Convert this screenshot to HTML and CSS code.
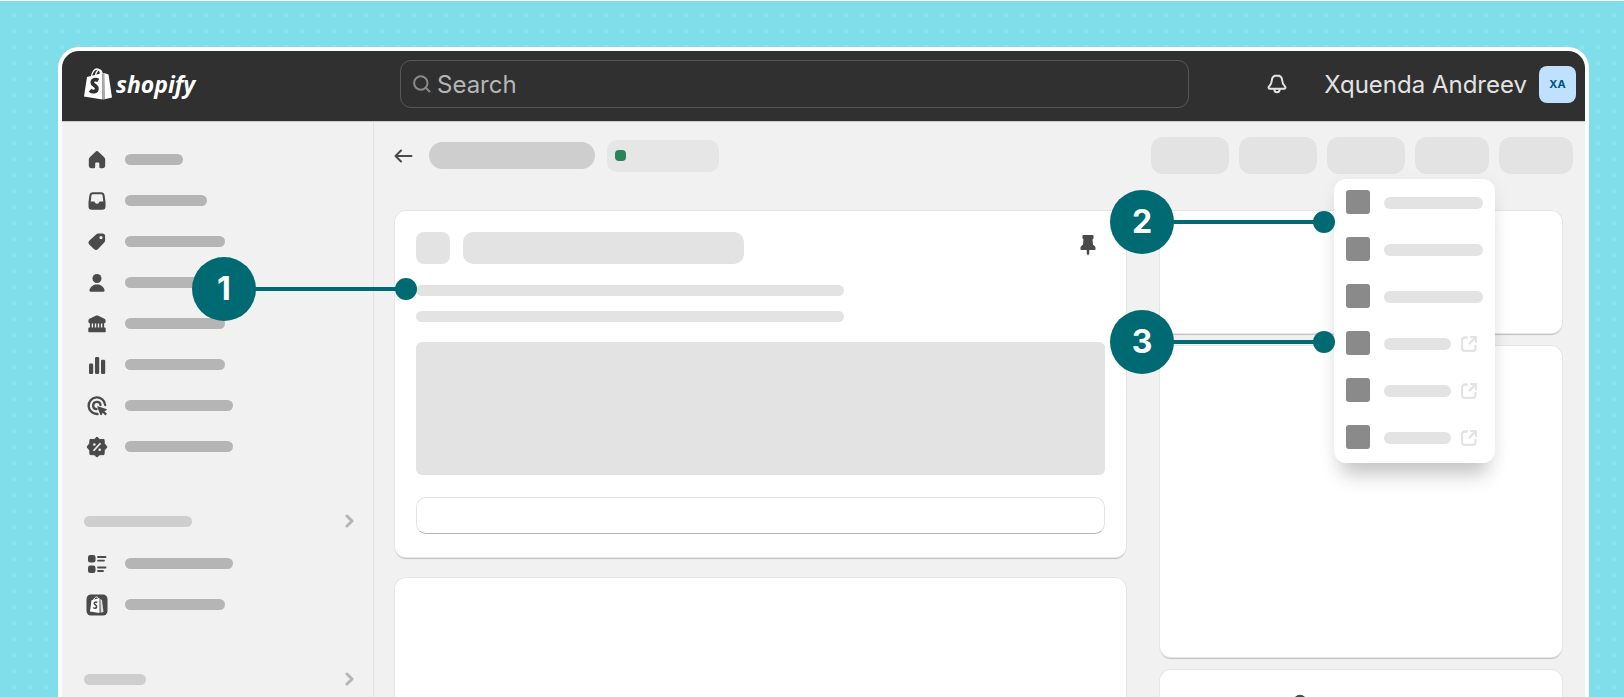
FILE: index.html
```html
<!DOCTYPE html>
<html lang="en">
<head>
  <meta charset="UTF-8">
  <meta name="viewport" content="width=device-width, initial-scale=1">
  <title>Shopify admin</title>
  <link rel="stylesheet" href="styles.css">
</head>
<body>

<!-- shared icons -->
<svg class="sprite" aria-hidden="true">
  <symbol id="chevron" viewBox="0 0 10 14">
    <path d="M2 2l5 5-5 5" fill="none" stroke="#b5b5b5" stroke-width="3" stroke-linecap="round" stroke-linejoin="round"/>
  </symbol>
  <symbol id="external" viewBox="0 0 16 16">
    <path d="M6 1.500H4A3 3 0 0 0 1 4.500V12a3 3 0 0 0 3 3h7.500a3 3 0 0 0 3-3v-2M10 1h5v5M14.500 1.500L8.500 7.500" fill="none" stroke="#e3e3e3" stroke-width="2.300" stroke-linecap="round" stroke-linejoin="round"/>
  </symbol>
</svg>

<div class="window">
  <header class="topbar">
    <a class="logo" href="#" aria-label="Shopify">
      <svg class="logo-bag" viewBox="0 0 28 32" aria-hidden="true">
        <path d="M3 9L18.500 5v26.500L0 28.500z" fill="#fff"/>
        <path d="M20 5l4.500 1.500L28 29.500l-7.500 1.800z" fill="#fff"/>
        <path d="M18.500 5h2v26.500h-2z" fill="#aaa"/>
        <path d="M7.500 8.500C8 4 10.500 1 13 1c2.500 0 3.500 3 3.500 5.500M11.500 7.500C12 4 14 1.500 15.500 2c2 .5 2.500 2 2.500 4" fill="none" stroke="#fff" stroke-width="1.300"/>
        <path d="M14.300 12.300c-2.800-1.500-6-.5-6 2.200 0 3 5 3 4.500 6.500-.3 3-4.300 3.500-6.800 1.300" fill="none" stroke="#303030" stroke-width="3.800"/>
      </svg>
      <span class="logo-name">shopify</span>
    </a>
    <label class="search">
      <svg width="18" height="18" viewBox="0 0 18 18" aria-hidden="true">
        <path d="M12.500 12.500L16.500 16.500M14.500 8a6.700 6.700 0 1 1-13.400 0a6.700 6.700 0 0 1 13.400 0z" fill="none" stroke="#8a8a8a" stroke-width="2" stroke-linecap="round"/>
      </svg>
      <input type="search" placeholder="Search" aria-label="Search">
    </label>
    <div class="account">
      <button class="bell" type="button" aria-label="Notifications">
        <svg width="20" height="20" viewBox="0 0 20 20" aria-hidden="true">
          <path d="M10 1.500c-3 0-5 2.200-5.200 5-.2 3-.8 4.300-2.600 5.700-1.200 1-.6 2.500.8 2.500h14c1.400 0 2-1.500.8-2.500-1.800-1.400-2.400-2.700-2.600-5.700-.2-2.800-2.200-5-5.200-5zM7.300 15c0 2 1.200 3.300 2.700 3.300s2.700-1.300 2.700-3.300" fill="none" stroke="#e3e3e3" stroke-width="2" stroke-linejoin="round"/>
        </svg>
      </button>
      <span class="user-name">Xquenda Andreev</span>
      <span class="avatar">XA</span>
    </div>
  </header>

  <div class="layout">
    <nav class="sidebar" aria-label="Main">
      <a class="nav-item" href="#" aria-label="Home">
        <svg viewBox="0 0 20 20"><path d="M8.300 1.900a2.500 2.500 0 0 1 3.400 0l5.300 5c.8.700 1.200 1.600 1.200 2.600v6.300a2.400 2.400 0 0 1-2.400 2.400h-2a1.500 1.500 0 0 1-1.500-1.500V13.500c0-.6-.4-1-1-1H9.200c-.6 0-1 .4-1 1v3.200a1.500 1.500 0 0 1-1.500 1.500H4.200a2.400 2.400 0 0 1-2.400-2.400V9.500c0-1 .4-1.900 1.200-2.600z"/></svg>
        <span class="bar w58"></span>
      </a>
      <a class="nav-item" href="#" aria-label="Orders">
        <svg viewBox="0 0 20 20"><path fill-rule="evenodd" d="M5.500 1.200h9a3 3 0 0 1 3 2.600l1 7.200v4.500a3.300 3.300 0 0 1-3.300 3.300H4.800a3.300 3.300 0 0 1-3.300-3.300V11l1-7.200a3 3 0 0 1 3-2.600zM5.800 3.200c-.7 0-1.200.4-1.300 1.100L3.700 10.500h2.800c.8 0 1.200.5 1.600 1.200.4.600 1 1 1.900 1s1.500-.4 1.900-1c.4-.7.800-1.200 1.600-1.200h2.800l-.8-6.200c-.1-.7-.6-1.100-1.300-1.100z"/></svg>
        <span class="bar w82"></span>
      </a>
      <a class="nav-item" href="#" aria-label="Products">
        <svg viewBox="0 0 20 20"><path fill-rule="evenodd" d="M11.300 1.500h4.200A2.600 2.600 0 0 1 18.100 4.100v4.200c0 .8-.3 1.500-.9 2.100l-6.100 6.600a3 3 0 0 1-4.200 0l-4.400-4.300a3 3 0 0 1 0-4.200l6.600-6.100A3.200 3.200 0 0 1 11.300 1.500zM14 7.200a1.600 1.600 0 1 0 0-3.200a1.600 1.600 0 0 0 0 3.200z"/></svg>
        <span class="bar w100"></span>
      </a>
      <a class="nav-item" href="#" aria-label="Customers">
        <svg viewBox="0 0 20 20"><circle cx="10" cy="5.500" r="4.500"/><path d="M2.500 17c.8-3.500 4-5.500 7.500-5.500s6.700 2 7.500 5.500c.2 1-.2 1.700-1.200 1.700H3.700c-1 0-1.400-.7-1.200-1.700z"/></svg>
        <span class="bar w100"></span>
      </a>
      <a class="nav-item" href="#" aria-label="Finances">
        <svg viewBox="0 0 20 20"><path d="M9.200 1.600c.5-.3 1.100-.3 1.600 0l6.700 3.200c.7.3 1.100.9 1.100 1.600v1.300c0 .9-.7 1.500-1.500 1.500v4.300h.4c.8 0 1.200.5 1.200 1.200v2.600c0 .6-.4 1-1 1H2.300c-.6 0-1-.4-1-1v-2.600c0-.7.500-1.200 1.200-1.200h.4V9.200c-.8 0-1.500-.6-1.500-1.500V6.400c0-.7.400-1.300 1.100-1.600z"/><path d="M5.400 9.500v4M8.500 9.500v4M11.500 9.500v4M14.600 9.500v4" stroke="#f1f1f1" stroke-width="1.400"/></svg>
        <span class="bar w100"></span>
      </a>
      <a class="nav-item" href="#" aria-label="Analytics">
        <svg viewBox="0 0 20 20"><rect x="2" y="8.500" width="4.200" height="10.500" rx="1.300"/><rect x="8" y="2" width="4.200" height="17" rx="1.300"/><rect x="14" y="4.800" width="4.200" height="14.200" rx="1.300"/></svg>
        <span class="bar w100"></span>
      </a>
      <a class="nav-item" href="#" aria-label="Marketing">
        <svg viewBox="0 0 20 20"><path d="M18.200 9A8.300 8.300 0 1 0 10.500 18M13.500 9A3.700 3.700 0 1 0 9.500 13.200" fill="none" stroke="#4a4a4a" stroke-width="2.300" stroke-linecap="round"/><path d="M10.800 10.300l8.500 2.700c.6.200.7 1 .1 1.300l-2 1 2.600 2.400-1.700 1.700-2.500-2.600-1.200 2.100c-.3.500-1.100.4-1.300-.1l-3-7.900c-.1-.4.100-.7.500-.6z"/></svg>
        <span class="bar w108"></span>
      </a>
      <a class="nav-item" href="#" aria-label="Discounts">
        <svg viewBox="0 0 20 20"><path d="M10 0l2.800 2.500 4.200-.1.300 4L20 10l-2.700 3.300-.3 4.300-4.200.1L10 20l-2.800-2.300-4.200-.1-.3-4.300L0 10l2.700-3.600.3-4 4.200.1z" stroke="#4a4a4a" stroke-linejoin="round"/><path d="M7 13.300l6-6.600" stroke="#f1f1f1" stroke-width="1.700" stroke-linecap="round"/><circle cx="7.300" cy="7.500" r="1.300" fill="#f1f1f1"/><circle cx="12.700" cy="12.700" r="1.300" fill="#f1f1f1"/></svg>
        <span class="bar w108"></span>
      </a>

      <div class="nav-heading">
        <span class="bar w108"></span>
        <svg width="10" height="14" aria-hidden="true"><use href="#chevron"/></svg>
      </div>
      <a class="nav-item" href="#" aria-label="Online Store">
        <svg viewBox="0 0 20 20"><rect x="1" y="1" width="7.500" height="7.500" rx="2.300"/><rect x="1" y="11.500" width="7.500" height="7.500" rx="2.300"/><path d="M11 3h7.500M11 6.600h6M11 13.500h7.500M11 17h5" stroke="#4a4a4a" stroke-width="1.800" stroke-linecap="round"/></svg>
        <span class="bar w108"></span>
      </a>
      <a class="nav-item" href="#" aria-label="Point of Sale">
        <svg viewBox="0 0 20 20"><rect x="-0.500" y="-0.500" width="21" height="21" rx="4.500"/><path d="M4.500 5.200L12.500 3v15L3 16.500z" fill="#fff"/><path d="M13.300 4l1.700 1 1.500 12-2.800.8z" fill="#ddd"/><path d="M6.500 5.500c.4-2 1.700-3.500 3-3.500s2 1.200 2.200 2.500" fill="none" stroke="#fff"/><path d="M10.300 7.500c-1.500-.9-3-.3-3 .9 0 1.500 2.500 1.600 2.300 3.400-.2 1.600-2 1.800-3.300.7" fill="none" stroke="#4a4a4a" stroke-width="1.600"/></svg>
        <span class="bar w100"></span>
      </a>
      <div class="nav-heading">
        <span class="bar w62"></span>
        <svg width="10" height="14" aria-hidden="true"><use href="#chevron"/></svg>
      </div>
    </nav>

    <main class="main">
      <div class="page-header">
        <a class="back" href="#" aria-label="Back">
          <svg width="19" height="14" viewBox="0 0 19 14" aria-hidden="true"><path d="M17.500 7H2M7 1.500L1.500 7 7 12.500" fill="none" stroke="#4a4a4a" stroke-width="2" stroke-linecap="round" stroke-linejoin="round"/></svg>
        </a>
        <div class="page-title"></div>
        <div class="status"><span class="status-dot"></span></div>
        <div class="actions">
          <button class="action" type="button" aria-label="Duplicate"></button>
          <button class="action" type="button" aria-label="Preview"></button>
          <div class="dropdown">
            <button class="action" type="button" aria-label="More actions"></button>
            <ul class="menu">
              <li><span class="thumb"></span><span class="line"></span></li>
              <li><span class="thumb"></span><span class="line"></span></li>
              <li><span class="thumb"></span><span class="line"></span></li>
              <li><span class="thumb"></span><span class="line"></span><svg width="16" height="16"><use href="#external"/></svg></li>
              <li><span class="thumb"></span><span class="line"></span><svg width="16" height="16"><use href="#external"/></svg></li>
              <li><span class="thumb"></span><span class="line"></span><svg width="16" height="16"><use href="#external"/></svg></li>
            </ul>
          </div>
          <button class="action action-nav" type="button" aria-label="Previous"></button>
          <button class="action action-nav" type="button" aria-label="Next"></button>
        </div>
      </div>

      <div class="columns">
        <div class="column column-main">
          <section class="card card-detail">
            <div class="card-header">
              <span class="card-icon"></span>
              <span class="card-title"></span>
              <svg class="pin" width="16" height="26" viewBox="0 0 16 26" aria-hidden="true"><path d="M3.500 0h9c.6 0 1 .4 1 1v2c0 .8-.4 1.300-1 1.600l.6 5.400c1.700.5 2.400 1.600 2.400 3v1c0 .6-.4 1-1 1H9.300v3.500L8 20.500 6.700 18.500V15H1.500c-.6 0-1-.4-1-1v-1c0-1.400.7-2.500 2.400-3l.6-5.400c-.6-.3-1-.8-1-1.600V1c0-.6.400-1 1-1z" fill="#4a4a4a"/></svg>
            </div>
            <div class="text-line"></div>
            <div class="text-line"></div>
            <div class="media"></div>
            <input class="field" type="text" aria-label="Note">
          </section>
          <section class="card card-tall"></section>
        </div>
        <div class="column column-side">
          <section class="card card-short"></section>
          <section class="card card-medium"></section>
          <section class="card card-search">
            <svg width="20" height="20" viewBox="0 0 20 20" aria-hidden="true"><circle cx="10" cy="7.500" r="5.500" fill="none" stroke="#4a4a4a" stroke-width="2.500"/></svg>
          </section>
        </div>
      </div>
    </main>
  </div>

  <div class="callout callout-1"><span class="callout-number">1</span></div>
  <div class="callout callout-2"><span class="callout-number">2</span></div>
  <div class="callout callout-3"><span class="callout-number">3</span></div>
</div>

</body>
</html>
```
FILE: styles.css
```css
* {
  box-sizing: border-box;
}
body {
  margin: 0;
  height: 100vh;
  overflow: hidden;
  padding: 46px 35px 0 58px;
  border-top: 1px solid #fff;
  font-family: Inter, "Liberation Sans", sans-serif;
  background-color: #80ddea;
  background-image: conic-gradient(from 270deg at 4px 4px, #8ce1ec 90deg, transparent 0);
  background-size: 16px 16px;
  background-position: 12px 13px;
}
.sprite {
  display: none;
}
button {
  border: none;
  padding: 0;
  cursor: pointer;
}

/* window */
.window {
  position: relative;
  border: 4px solid #fff;
  border-bottom: none;
  border-radius: 21px 21px 0 0;
  background-color: #f1f1f1;
}
.topbar {
  display: flex;
  align-items: center;
  height: 71px;
  padding: 0 9px 4px 22px;
  background-color: #303030;
  border-bottom: 1px solid #ccc;
  border-radius: 17px 17px 0 0;
}
.logo {
  display: flex;
  align-items: center;
  gap: 4px;
  width: 316px;
  color: #fff;
  text-decoration: none;
}
.logo-bag {
  width: 28px;
  height: 32px;
}
.logo-name {
  font-family: "Open Sans", sans-serif;
  font-size: 23px;
  line-height: 32px;
  font-weight: 700;
  font-style: italic;
}
.search {
  display: flex;
  align-items: center;
  gap: 6px;
  flex: 1;
  height: 48px;
  padding: 0 12px;
  border: 1px solid #575757;
  border-radius: 11px;
}
.search input {
  flex: 1;
  min-width: 0;
  border: none;
  outline: none;
  padding: 0;
  background: none;
  color: #e3e3e3;
  font-family: inherit;
  font-size: 24px;
}
.search input::placeholder {
  color: #b5b5b5;
}
.account {
  display: flex;
  align-items: center;
  justify-content: flex-end;
  width: 387px;
}
.bell {
  height: 20px;
  margin-right: 37px;
  background: none;
}
.user-name {
  color: #e3e3e3;
  font-size: 24px;
  margin-right: 12px;
}
.avatar {
  width: 37px;
  height: 37px;
  border-radius: 8px;
  background-color: #bfe0ff;
  color: #00527c;
  font-size: 11px;
  line-height: 37px;
  font-weight: 700;
  text-align: center;
}

/* sidebar */
.layout {
  display: flex;
  min-height: 700px;
}
.sidebar {
  width: 312px;
  padding-top: 17px;
  border-right: 1px solid #e3e3e3;
}
.nav-item {
  display: flex;
  align-items: center;
  gap: 18px;
  height: 41px;
  padding-left: 25px;
}
.nav-item svg {
  width: 20px;
  height: 20px;
  overflow: visible;
  fill: #4a4a4a;
}
.bar {
  height: 11px;
  border-radius: 6px;
  background-color: #b5b5b5;
}
.nav-heading {
  display: flex;
  align-items: center;
  justify-content: space-between;
  height: 24px;
  margin-top: 42px;
  margin-bottom: 10px;
  padding: 0 18px 0 22px;
}
.nav-heading .bar {
  background-color: #cecece;
}
.w58 { width: 58px; }
.w62 { width: 62px; }
.w82 { width: 82px; }
.w100 { width: 100px; }
.w108 { width: 108px; }

/* page header */
.main {
  flex: 1;
  min-width: 0;
}
.page-header {
  display: flex;
  align-items: center;
  height: 67px;
  padding: 0 12px 0 20px;
}
.back {
  height: 14px;
  margin-right: 16px;
}
.back svg, .bell svg {
  display: block;
}
.page-title {
  width: 166px;
  height: 27px;
  margin-right: 12px;
  border-radius: 14px;
  background-color: #cecece;
}
.status {
  display: flex;
  align-items: center;
  width: 112px;
  height: 32px;
  padding-left: 8px;
  border-radius: 10px;
  background-color: #e6e6e6;
}
.status-dot {
  width: 11px;
  height: 11px;
  border-radius: 4px;
  background-color: #29845a;
}
.actions {
  display: flex;
  gap: 10px;
  margin-left: auto;
}
.action {
  display: block;
  width: 78px;
  height: 37px;
  border-radius: 12px;
  background-color: #e3e3e3;
}
.action-nav {
  width: 74px;
}
.dropdown {
  position: relative;
}
.menu {
  position: absolute;
  top: 42px;
  left: 7px;
  z-index: 1;
  display: flex;
  flex-direction: column;
  gap: 23px;
  width: 161px;
  margin: 0;
  padding: 11px 12px 14px;
  list-style: none;
  border-radius: 12px;
  background-color: #fff;
  box-shadow: 0 4px 20px rgba(0,0,0,0.06), 0 20px 20px -8px rgba(0,0,0,0.2);
}
.menu li {
  display: flex;
  align-items: center;
  height: 24px;
}
.thumb {
  width: 24px;
  height: 24px;
  margin-right: 14px;
  border-radius: 3px;
  background-color: #8a8a8a;
}
.line {
  flex: 1;
  height: 12px;
  margin-top: 2px;
  border-radius: 6px;
  background-color: #e3e3e3;
}
.menu svg {
  margin: 2px 6px 0 10px;
}

/* cards */
.columns {
  display: flex;
  gap: 34px;
  padding: 22px 23px 0 21px;
}
.column {
  display: flex;
  flex-direction: column;
}
.column-main {
  flex: 1;
  gap: 21px;
}
.column-side {
  width: 402px;
  gap: 13px;
}
.card {
  border-radius: 11px;
  background-color: #fff;
  box-shadow: 0 0 0 1px #e5e5e5, 0 2px 1px rgba(0,0,0,0.2);
}
.card-detail {
  padding: 21px 21px 23px;
}
.card-header {
  display: flex;
  align-items: center;
  height: 32px;
  margin-bottom: 21px;
}
.card-icon {
  width: 34px;
  height: 32px;
  margin-right: 13px;
  border-radius: 8px;
  background-color: #e3e3e3;
}
.card-title {
  width: 281px;
  height: 32px;
  border-radius: 10px;
  background-color: #e3e3e3;
}
.pin {
  margin-left: auto;
  margin-right: 9px;
}
.text-line {
  width: 428px;
  height: 11px;
  margin-bottom: 15px;
  border-radius: 6px;
  background-color: #e3e3e3;
}
.media {
  height: 133px;
  margin-top: 20px;
  border-radius: 6px;
  background-color: #e3e3e3;
}
.field {
  display: block;
  width: 100%;
  height: 37px;
  margin-top: 22px;
  padding: 0 12px;
  border: 1px solid #e3e3e3;
  border-bottom-color: #b5b5b5;
  border-radius: 10px;
  background-color: #fff;
}
.card-tall {
  height: 240px;
}
.card-short {
  height: 122px;
}
.card-medium {
  height: 311px;
}
.card-search {
  height: 160px;
  padding: 24px 130px;
}

/* callouts */
.callout {
  position: absolute;
  z-index: 2;
  width: 225px;
  height: 64px;
  background: linear-gradient(#006a72, #006a72) 40px 30px / 170px 4px no-repeat;
}
.callout::after {
  content: "";
  position: absolute;
  top: 21px;
  right: 0;
  width: 22px;
  height: 22px;
  border-radius: 50%;
  background-color: #006a72;
}
.callout-number {
  display: block;
  width: 64px;
  height: 64px;
  border-radius: 50%;
  background-color: #006a72;
  color: #fff;
  font-size: 32px;
  line-height: 64px;
  font-weight: 700;
  text-align: center;
}
.callout-1 {
  top: 206px;
  left: 130px;
}
.callout-2 {
  top: 139px;
  right: 250px;
}
.callout-3 {
  top: 259px;
  right: 250px;
}
```
